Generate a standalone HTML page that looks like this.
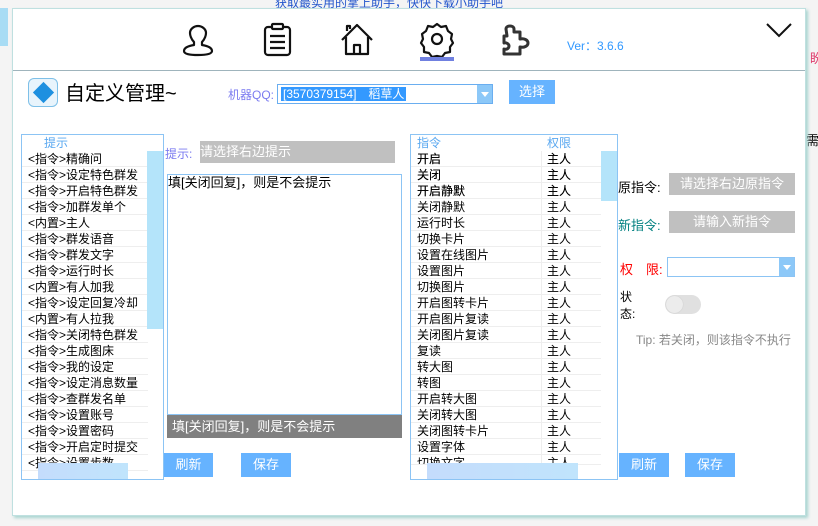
<!DOCTYPE html>
<html><head><meta charset="utf-8"><style>
*{margin:0;padding:0;box-sizing:border-box}
body{width:818px;height:526px;position:relative;overflow:hidden;background:#f4f4f4;font-family:"Liberation Sans","WenQuanYi Zen Hei","Noto Sans CJK SC",sans-serif;font-size:12px;color:#000}
.a{position:absolute}
#panel{left:12px;top:8px;width:794px;height:508px;background:#fff;border:1px solid #bfe0e0;box-shadow:2px 2px 3px #a8d4d0}
.row{height:16px;line-height:16px;border-bottom:1px solid #eee;white-space:nowrap;padding-left:6px}
.btn{background:#66b3ff;color:#fff;text-align:center;line-height:24px;font-size:13px}
.gray{background:#c0c0c0;color:#fff;text-align:center}
</style></head><body>
<div class="a" style="left:0;top:8px;width:8px;height:38px;background:#a8dcf4"></div>
<div class="a" style="left:275px;top:-6px;color:#2255cc;font-size:12px">获取最实用的掌上助手，快快下载小助手吧</div>
<div class="a" style="left:810px;top:48px;color:#e04070;font-size:13px">盼</div>
<div class="a" style="left:806px;top:130px;font-size:13px">需</div>
<div id="panel" class="a">
</div>
<!-- header -->
<div class="a" style="left:13px;top:70px;width:792px;height:1px;background:#9fb4bc"></div>
<svg class="a" style="left:180px;top:22px" width="360" height="40" viewBox="0 0 360 40">
<g fill="none" stroke="#111" stroke-width="2.2" stroke-linejoin="round">
<path d="M10 17c-3-3-4-7-4-9 0-4 4-7 8-7s8 3 8 7c0 2-1 6-4 9l0 3c6 1 10 3 10 6 0 3-6 4-14 4S0 29 0 26c0-3 4-5 10-6z" transform="translate(4,3)"/>
<rect x="85" y="5" width="25" height="28" rx="3"/><rect x="92" y="2" width="11" height="5" rx="1" fill="#fff"/>
<path d="M90 14h15M90 20h15M90 26h15"/>
<path d="M162 18l15-15 15 15M166 15v17h22V15M174 32v-9h6v9M167 9V4h3v3"/>
<circle cx="257" cy="17" r="5"/>
<path d="M257 2l4 3 5-1 2 5 4 3-1 5 2 4-3 4 0 5-5 1-3 4-5-1-5 1-3-4-5-1 0-5-3-4 2-4-1-5 4-3 2-5 5 1z"/>
<path d="M326 7c0-4 8-4 8 0v3h6v7c4-1 8 1 8 4s-4 5-8 4v7h-16v-5c3 1 5-1 5-3s-3-4-5-3v-7h3z" stroke-width="3" stroke="#333"/>
</g></svg>
<div class="a" style="left:420px;top:57px;width:34px;height:4px;background:#7080e0"></div>
<div class="a" style="left:567px;top:37px;color:#3399ff;font-size:12px">Ver：3.6.6</div>
<svg class="a" style="left:766px;top:22px" width="26" height="16"><path d="M1 2l12 12 12-12" fill="none" stroke="#111" stroke-width="2"/></svg>
<!-- title -->
<div class="a" style="left:28px;top:78px;width:30px;height:29px;border:1px solid #7ec0e8;border-radius:6px;background:#e8f4fc"></div>
<div class="a" style="left:36px;top:85px;width:15px;height:15px;background:#1e90e0;transform:rotate(45deg)"></div>
<div class="a" style="left:65px;top:82px;font-size:20px;line-height:24px">自定义管理~</div>
<div class="a" style="left:228px;top:86px;color:#7b7bf0;font-size:12px">机器QQ:</div>
<div class="a" style="left:277px;top:84px;width:216px;height:20px;border:1px solid #6aaef0;background:#fff"></div>
<div class="a" style="left:281px;top:87px;height:14px;line-height:14px;background:#3399ff;color:#fff;padding:0 2px">[3570379154]　稻草人</div>
<div class="a" style="left:477px;top:85px;width:15px;height:18px;background:#8cc8f8"></div>
<div class="a" style="left:481px;top:92px;border:4px solid transparent;border-top:5px solid #fff"></div>
<div class="btn a" style="left:509px;top:80px;width:46px;height:24px">选择</div>
<!-- left list -->
<div class="a" style="left:21px;top:134px;width:143px;height:346px;border:1px solid #8cc4f4;overflow:hidden;background:#fff">
<div style="height:16px;line-height:16px;color:#5aa8f0;padding-left:22px">提示</div>
<div style="width:126px">
<div class="row">&lt;指令&gt;精确问</div><div class="row">&lt;指令&gt;设定特色群发</div><div class="row">&lt;指令&gt;开启特色群发</div><div class="row">&lt;指令&gt;加群发单个</div><div class="row">&lt;内置&gt;主人</div><div class="row">&lt;指令&gt;群发语音</div><div class="row">&lt;指令&gt;群发文字</div><div class="row">&lt;指令&gt;运行时长</div><div class="row">&lt;内置&gt;有人加我</div><div class="row">&lt;指令&gt;设定回复冷却</div><div class="row">&lt;内置&gt;有人拉我</div><div class="row">&lt;指令&gt;关闭特色群发</div><div class="row">&lt;指令&gt;生成图床</div><div class="row">&lt;指令&gt;我的设定</div><div class="row">&lt;指令&gt;设定消息数量</div><div class="row">&lt;指令&gt;查群发名单</div><div class="row">&lt;指令&gt;设置账号</div><div class="row">&lt;指令&gt;设置密码</div><div class="row">&lt;指令&gt;开启定时提交</div><div class="row">&lt;指令&gt;设置步数</div>
</div>
<div class="a" style="left:125px;top:16px;width:16px;height:178px;background:#b4e4fa"></div>
<div class="a" style="left:16px;top:328px;width:90px;height:18px;background:linear-gradient(90deg,#c4dcfc,#c0e4fc)"></div>
</div>
<!-- middle -->
<div class="a" style="left:165px;top:145px;color:#7b7bf0;font-size:12px">提示:</div>
<div class="gray a" style="left:200px;top:141px;width:195px;height:22px;line-height:22px;text-align:left;font-size:13px">请选择右边提示</div>
<div class="a" style="left:167px;top:174px;width:235px;height:241px;border:1px solid #8cc4f4;padding:0 0;font-size:13px;line-height:16px">填[关闭回复]，则是不会提示</div>
<div class="a" style="left:167px;top:415px;width:235px;height:23px;background:#808080;color:#fff;font-size:13px;line-height:23px;padding-left:5px">填[关闭回复]，则是不会提示</div>
<div class="btn a" style="left:164px;top:453px;width:49px;height:24px">刷新</div>
<div class="btn a" style="left:241px;top:453px;width:50px;height:24px">保存</div>
<!-- right list -->
<div class="a" style="left:410px;top:134px;width:208px;height:346px;border:1px solid #8cc4f4;overflow:hidden;background:#fff">
<div style="height:16px;line-height:16px;color:#5aa8f0;position:relative"><span style="position:absolute;left:6px">指令</span><span style="position:absolute;left:136px">权限</span></div>
<div style="width:190px;position:relative">
<div class="a" style="left:130px;top:0;width:1px;height:340px;background:#eee"></div>
<div class="row">开启<span class="a" style="left:136px">主人</span></div><div class="row">关闭<span class="a" style="left:136px">主人</span></div><div class="row" style="position:relative">开启静默<span class="a" style="left:136px">主人</span></div>
</div></div>
<div class="a" style="left:411px;top:151px;width:190px">
<div class="row" style="position:relative">开启<span class="a" style="left:136px">主人</span></div>
<div class="row" style="position:relative">关闭<span class="a" style="left:136px">主人</span></div>
<div class="row" style="position:relative">开启静默<span class="a" style="left:136px">主人</span></div>
<div class="row" style="position:relative">关闭静默<span class="a" style="left:136px">主人</span></div>
<div class="row" style="position:relative">运行时长<span class="a" style="left:136px">主人</span></div>
<div class="row" style="position:relative">切换卡片<span class="a" style="left:136px">主人</span></div>
<div class="row" style="position:relative">设置在线图片<span class="a" style="left:136px">主人</span></div>
<div class="row" style="position:relative">设置图片<span class="a" style="left:136px">主人</span></div>
<div class="row" style="position:relative">切换图片<span class="a" style="left:136px">主人</span></div>
<div class="row" style="position:relative">开启图转卡片<span class="a" style="left:136px">主人</span></div>
<div class="row" style="position:relative">开启图片复读<span class="a" style="left:136px">主人</span></div>
<div class="row" style="position:relative">关闭图片复读<span class="a" style="left:136px">主人</span></div>
<div class="row" style="position:relative">复读<span class="a" style="left:136px">主人</span></div>
<div class="row" style="position:relative">转大图<span class="a" style="left:136px">主人</span></div>
<div class="row" style="position:relative">转图<span class="a" style="left:136px">主人</span></div>
<div class="row" style="position:relative">开启转大图<span class="a" style="left:136px">主人</span></div>
<div class="row" style="position:relative">关闭转大图<span class="a" style="left:136px">主人</span></div>
<div class="row" style="position:relative">关闭图转卡片<span class="a" style="left:136px">主人</span></div>
<div class="row" style="position:relative">设置字体<span class="a" style="left:136px">主人</span></div>
<div class="row" style="position:relative;height:10px;overflow:hidden">切换文字<span class="a" style="left:136px">主人</span></div>
<div class="a" style="left:130px;top:0;width:1px;height:318px;background:#eee"></div>
</div>
<div class="a" style="left:411px;top:135px;width:206px;height:16px;background:#fff;color:#5aa8f0;line-height:16px"><span class="a" style="left:6px">指令</span><span class="a" style="left:136px">权限</span></div>
<div class="a" style="left:601px;top:151px;width:16px;height:50px;background:#b4e4fa"></div>
<div class="a" style="left:427px;top:463px;width:151px;height:16px;background:linear-gradient(90deg,#c4dcfc,#c0e4fc)"></div>
<!-- right form -->
<div class="a" style="left:618px;top:177px;font-size:13px">原指令:</div>
<div class="gray a" style="left:669px;top:173px;width:126px;height:22px;line-height:22px;font-size:13px">请选择右边原指令</div>
<div class="a" style="left:618px;top:215px;font-size:13px;color:#008080">新指令:</div>
<div class="gray a" style="left:669px;top:211px;width:126px;height:22px;line-height:22px;font-size:13px">请输入新指令</div>
<div class="a" style="left:620px;top:259px;font-size:13px;color:#f00">权　限:</div>
<div class="a" style="left:667px;top:257px;width:128px;height:20px;border:1px solid #8cc4f4"></div>
<div class="a" style="left:779px;top:258px;width:15px;height:18px;background:#8cc8f8"></div>
<div class="a" style="left:783px;top:265px;border:4px solid transparent;border-top:5px solid #fff"></div>
<div class="a" style="left:620px;top:289px;font-size:12px;line-height:17px">状<br>态:</div>
<div class="a" style="left:665px;top:295px;width:36px;height:19px;border-radius:10px;background:#e0e0e0"></div>
<div class="a" style="left:666px;top:296px;width:17px;height:17px;border-radius:50%;background:#ececec;box-shadow:0 0 1px #bbb"></div>
<div class="a" style="left:636px;top:331px;color:#888;font-size:12px">Tip: 若关闭，则该指令不执行</div>
<div class="btn a" style="left:619px;top:453px;width:50px;height:24px">刷新</div>
<div class="btn a" style="left:685px;top:453px;width:50px;height:24px">保存</div>
</body></html>
